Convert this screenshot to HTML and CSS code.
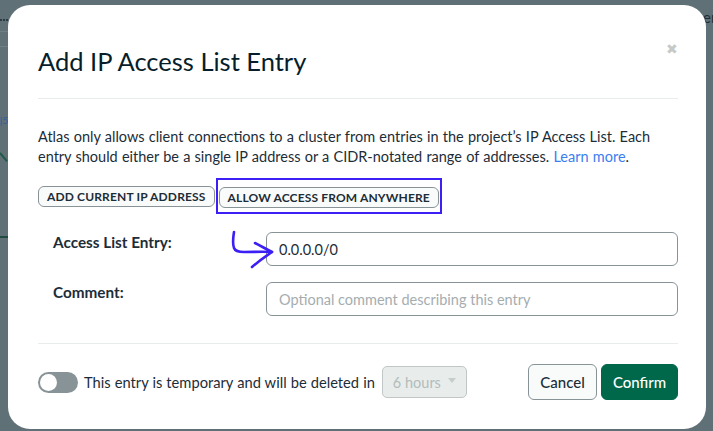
FILE: index.html
```html
<!DOCTYPE html>
<html lang="en">
<head>
<meta charset="utf-8">
<title>Add IP Access List Entry</title>
<link rel="stylesheet" href="styles.css">
</head>
<body>
<div class="backdrop">
  <span class="bg-dots"></span>
  <span class="bg-line bg-line1"></span>
  <span class="bg-line bg-line2"></span>
  <span class="bg-num">|5</span>
  <span class="bg-green-diag"></span>
  <span class="bg-green"></span>
  <span class="bg-er">er</span>
</div>
<div class="modal">
  <div class="header">
    <h1 class="title">Add IP Access List Entry</h1>
    <span class="close">&#x2716;</span>
  </div>
  <hr class="divider">
  <p class="intro">Atlas only allows client connections to a cluster from entries in the project’s IP Access List. Each<br>entry should either be a single IP address or a CIDR-notated range of addresses. <a class="link" href="#">Learn more</a>.</p>
  <div class="quick">
    <button class="chip">ADD CURRENT IP ADDRESS</button>
    <span class="highlight"><button class="chip">ALLOW ACCESS FROM ANYWHERE</button></span>
  </div>
  <div class="form">
    <label class="label">Access List Entry:</label>
    <div class="field">
      <svg class="arrow" width="50" height="44" viewBox="0 0 50 44" fill="none" stroke="#3b1ff5" stroke-width="2.6" stroke-linecap="round" stroke-linejoin="round">
        <path d="M4 2 C3 8 2.5 14 4 18 C5 21 8 22 14 22 C24 22 33 21.5 42 22"/>
        <path d="M25 13 C31 16 36 19 42 22 C36 26 29 31 22 37"/>
      </svg>
      <input class="input" type="text" value="0.0.0.0/0">
    </div>
    <label class="label">Comment:</label>
    <div class="field">
      <input class="input" type="text" placeholder="Optional comment describing this entry">
    </div>
  </div>
  <hr class="divider">
  <div class="footer">
    <div class="temp">
      <span class="toggle"><span class="knob"></span></span>
      <span class="temp-text">This entry is temporary and will be deleted in</span>
      <span class="select">6 hours <span class="caret"></span></span>
    </div>
    <div class="actions">
      <button class="btn btn-cancel">Cancel</button>
      <button class="btn btn-confirm">Confirm</button>
    </div>
  </div>
</div>
</body>
</html>
```
FILE: styles.css
```css
* { box-sizing: border-box; }
html, body { margin: 0; height: 100%; }
body {
  background: #5f7177;
  font-family: Lato, "Noto Sans", sans-serif;
  color: #1c2d38;
  overflow: hidden;
  padding: 5px 7px 0 8px;
  position: relative;
}
.backdrop { position: absolute; inset: 0; }
.bg-dots { position: absolute; left: 0; top: 19px; width: 8px; border-top: 2px dotted #2a3b44; }
.bg-line { position: absolute; left: 0; width: 8px; height: 1px; background: #6f8187; }
.bg-line1 { top: 31px; }
.bg-line2 { top: 46px; }
.bg-num { position: absolute; left: 0; top: 114px; font-size: 10px; color: #3a5b9a; }
.bg-green-diag { position: absolute; left: 0; top: 152px; width: 11px; height: 2px; background: #1f5a48; transform: rotate(50deg); transform-origin: left center; }
.bg-green { position: absolute; left: 0; top: 236px; width: 8px; height: 2px; background: #1f4b40; }
.bg-er { position: absolute; left: 703px; top: 8px; font-size: 15px; color: #1c2d38; }

.modal {
  position: relative;
  width: 698px;
  height: 424px;
  background: #fff;
  border-radius: 22px;
  padding: 0 28px 0 30px;
}
.header {
  display: flex;
  justify-content: space-between;
  align-items: flex-start;
  padding-top: 40px;
}
.title {
  margin: 0;
  font-size: 25.5px;
  font-weight: 400;
  line-height: 32px;
  color: #061e2b;
  letter-spacing: 0;
}
.close {
  font-size: 14px;
  line-height: 14px;
  color: #c6c9c9;
  margin-top: -3px;
  margin-right: 0;
}
.divider {
  border: 0;
  border-top: 1px solid #e8edeb;
  margin: 0;
}
.header + .divider { margin-top: 21px; }
.intro {
  margin: 28px 0 0;
  font-size: 14.5px;
  line-height: 20px;
  color: #1c2d38;
  word-spacing: 0.5px;
}
.link { color: #3b7ef0; text-decoration: none; }
.quick {
  display: flex;
  align-items: center;
  gap: 4px;
  margin-top: 19px;
}
.chip {
  font-family: inherit;
  height: 21px;
  padding: 0 8px;
  border: 1px solid #889397;
  border-radius: 6px;
  background: #f9fbfa;
  color: #1c2d38;
  font-size: 12px;
  font-weight: 700;
  letter-spacing: 0.15px;
}
.highlight {
  display: inline-flex;
  padding: 7px 1px 4px 1px;
  margin: -9px 0 -8px -3px;
  padding-bottom: 4px;
  border: 2px solid #3b1ff5;
}
.form {
  display: grid;
  grid-template-columns: 213px 1fr;
  row-gap: 16px;
  margin: 25px 0 0 15px;
}
.label {
  font-size: 15.3px;
  font-weight: 700;
  color: #1c2d38;
  padding-top: 1px;
}
.field { position: relative; }
.arrow { position: absolute; left: -36px; top: -2px; }
.input {
  display: block;
  width: 100%;
  height: 34px;
  border: 1px solid #889397;
  border-radius: 6px;
  padding: 0 12px;
  font-family: inherit;
  font-size: 14.5px;
  color: #1c2d38;
  background: #fff;
}
.input::placeholder { color: #a5adb0; }
.form + .divider { margin-top: 27px; }
.footer {
  display: flex;
  justify-content: space-between;
  align-items: center;
  margin-top: 20px;
}
.temp { display: flex; align-items: center; }
.toggle {
  position: relative;
  width: 40px;
  height: 21px;
  border-radius: 11px;
  background: #889397;
  margin-right: 6px;
}
.knob {
  position: absolute;
  left: 2px; top: 2px;
  width: 17px; height: 17px;
  border-radius: 50%;
  background: #fff;
}
.temp-text { font-size: 14.7px; color: #1c2d38; word-spacing: 0.3px; }
.select {
  display: inline-flex;
  align-items: center;
  justify-content: space-between;
  width: 85px;
  height: 32px;
  margin-left: 7px;
  padding: 0 10px;
  border: 1px solid #c1c7c6;
  border-radius: 5px;
  background: #e8edeb;
  color: #b2bcbc;
  font-size: 14.5px;
}
.caret {
  width: 0; height: 0;
  border-left: 4px solid transparent;
  border-right: 4px solid transparent;
  border-top: 5px solid #c6cdcc;
  margin-top: -4px;
}
.actions { display: flex; gap: 4px; }
.btn {
  font-family: inherit;
  height: 36px;
  border-radius: 6px;
  font-size: 15px;
  font-weight: 500;
}
.btn-cancel {
  width: 69px;
  border: 1px solid #889397;
  background: #f9fbfa;
  color: #1c2d38;
}
.btn-confirm {
  width: 77px;
  border: 1px solid #00684a;
  background: #00684a;
  color: #fff;
}
```
